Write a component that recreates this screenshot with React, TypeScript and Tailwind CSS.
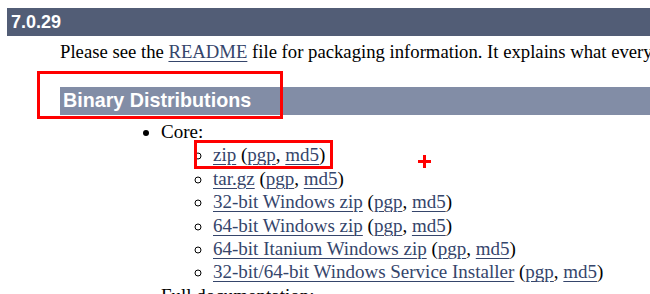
import React from 'react';

const coreFiles = [
  { name: 'zip' },
  { name: 'tar.gz' },
  { name: '32-bit Windows zip' },
  { name: '64-bit Windows zip' },
  { name: '64-bit Itanium Windows zip' },
  { name: '32-bit/64-bit Windows Service Installer' },
];

const linkCls = 'text-[#35456b] underline underline-offset-[3px] decoration-1';

export default function App() {
  return (
    <div className="relative w-[650px] h-[294px] overflow-hidden bg-white text-black font-['Liberation_Serif',serif] text-[19px]">
      <div className="pt-[8px] flex flex-col">
        {/* version header */}
        <div className="ml-[7px] h-[28px] bg-[#525d76] pl-[4px] flex items-center font-['Liberation_Sans',Arial,sans-serif] font-bold text-[18px] text-white">
          7.0.29
        </div>

        <p className="ml-[60px] mt-[4px] leading-[24px] whitespace-nowrap text-[18.7px]">
          Please see the <a className={linkCls}>README</a> file for packaging information. It explains what every
        </p>

        {/* section header */}
        <div className="ml-[60px] mt-[23px] h-[28px] bg-[#828da6] pl-[3px] flex items-center font-['Liberation_Sans',Arial,sans-serif] font-bold text-[19.7px] text-white">
          Binary Distributions
        </div>

        <ul className="ml-[161px] mt-[5px] list-disc leading-[23.4px]">
          <li>
            Core:
            <ul className="ml-[52px] list-[circle]">
              {coreFiles.map((f) => (
                <li key={f.name}>
                  <a className={linkCls}>{f.name}</a> (<a className={linkCls}>pgp</a>, <a className={linkCls}>md5</a>)
                </li>
              ))}
            </ul>
          </li>
          <li>Full documentation:</li>
        </ul>
      </div>

      {/* annotations */}
      <div className="absolute left-[37px] top-[71px] w-[246px] h-[48px] border-[3px] border-[#ff0000]" />
      <div className="absolute left-[194px] top-[140px] w-[139px] h-[29px] border-[3px] border-[#ff0000]" />
      <div className="absolute left-[418px] top-[160px] w-[13px] h-[3px] bg-[#ff0000]" />
      <div className="absolute left-[423px] top-[155px] w-[3px] h-[13px] bg-[#ff0000]" />
    </div>
  );
}
